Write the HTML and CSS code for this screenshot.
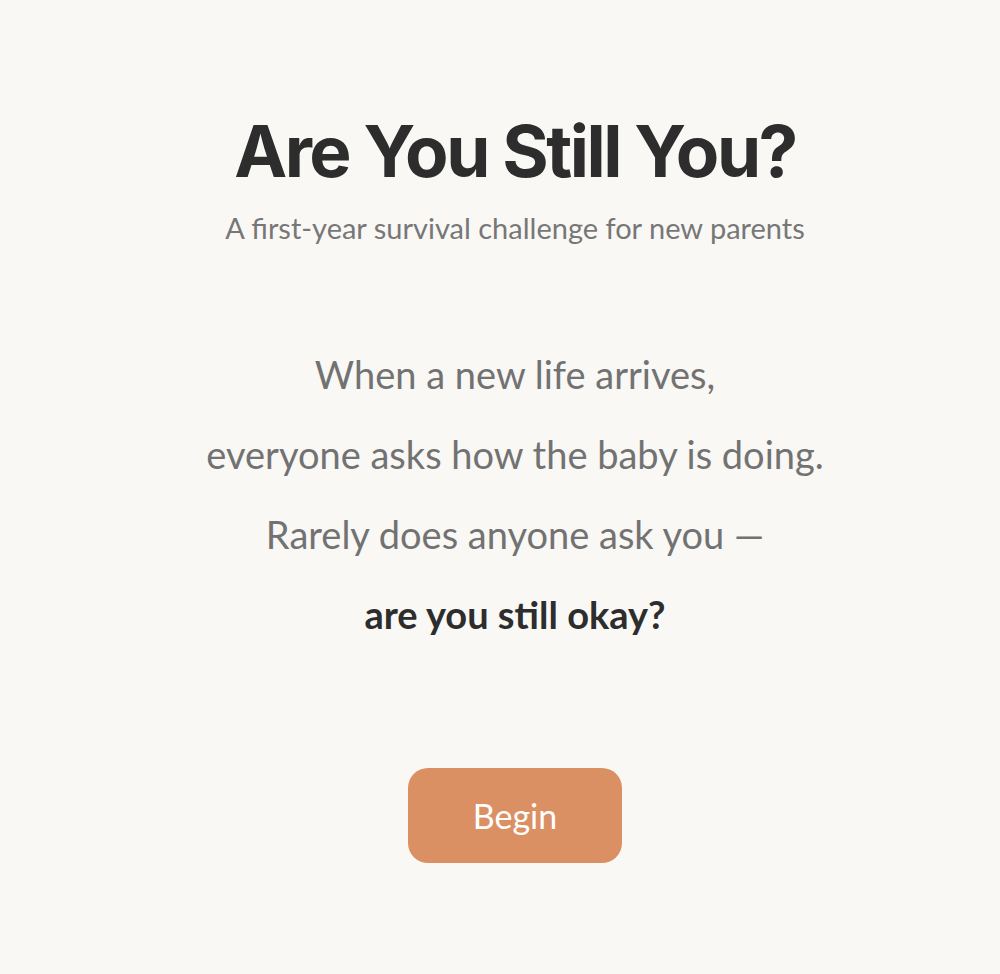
FILE: index.html
```html
<!DOCTYPE html>
<html lang="en">
<head>
  <meta charset="UTF-8">
  <meta name="viewport" content="width=device-width, initial-scale=1.0">
  <title>Are You Still You?</title>
  <link rel="stylesheet" href="styles.css">
</head>
<body>
<div class="intro">
  <h1 class="title">Are You Still You?</h1>
  <p class="subtitle">A first-year survival challenge for new parents</p>

  <div class="story">
    <p>When a new life arrives,</p>
    <p>everyone asks how the baby is doing.</p>
    <p>Rarely does anyone ask you —</p>
    <p class="strong">are you still okay?</p>
  </div>

  <button class="begin-btn">Begin</button>
</div>
</body>
</html>
```

FILE: styles.css
```css
body {
  margin: 0;
  background-color: #f9f8f5;
  font-family: 'Lato', 'Open Sans', sans-serif;
  color: #727272;
}

.intro {
  display: flex;
  flex-direction: column;
  align-items: center;
  text-align: center;
  padding: 106px 0 0 30px;
}

.title {
  font-family: 'Inter', sans-serif;
  font-size: 71px;
  font-weight: 700;
  letter-spacing: -2.5px;
  color: #2d2d2d;
  margin: 0;
  line-height: 90px;
}

.subtitle {
  font-size: 29px;
  margin: 14px 0 0;
  line-height: 36px;
  color: #777;
}

.story {
  margin-top: 88px;
}

.story p {
  font-size: 38px;
  line-height: 80px;
  margin: 0;
}

.story .strong {
  color: #2d2d2d;
  font-weight: 700;
}

.begin-btn {
  margin-top: 114px;
  width: 214px;
  height: 95px;
  border: none;
  border-radius: 20px;
  background-color: #db9064;
  color: #fff;
  font-family: inherit;
  font-size: 34px;
  cursor: pointer;
}
```
